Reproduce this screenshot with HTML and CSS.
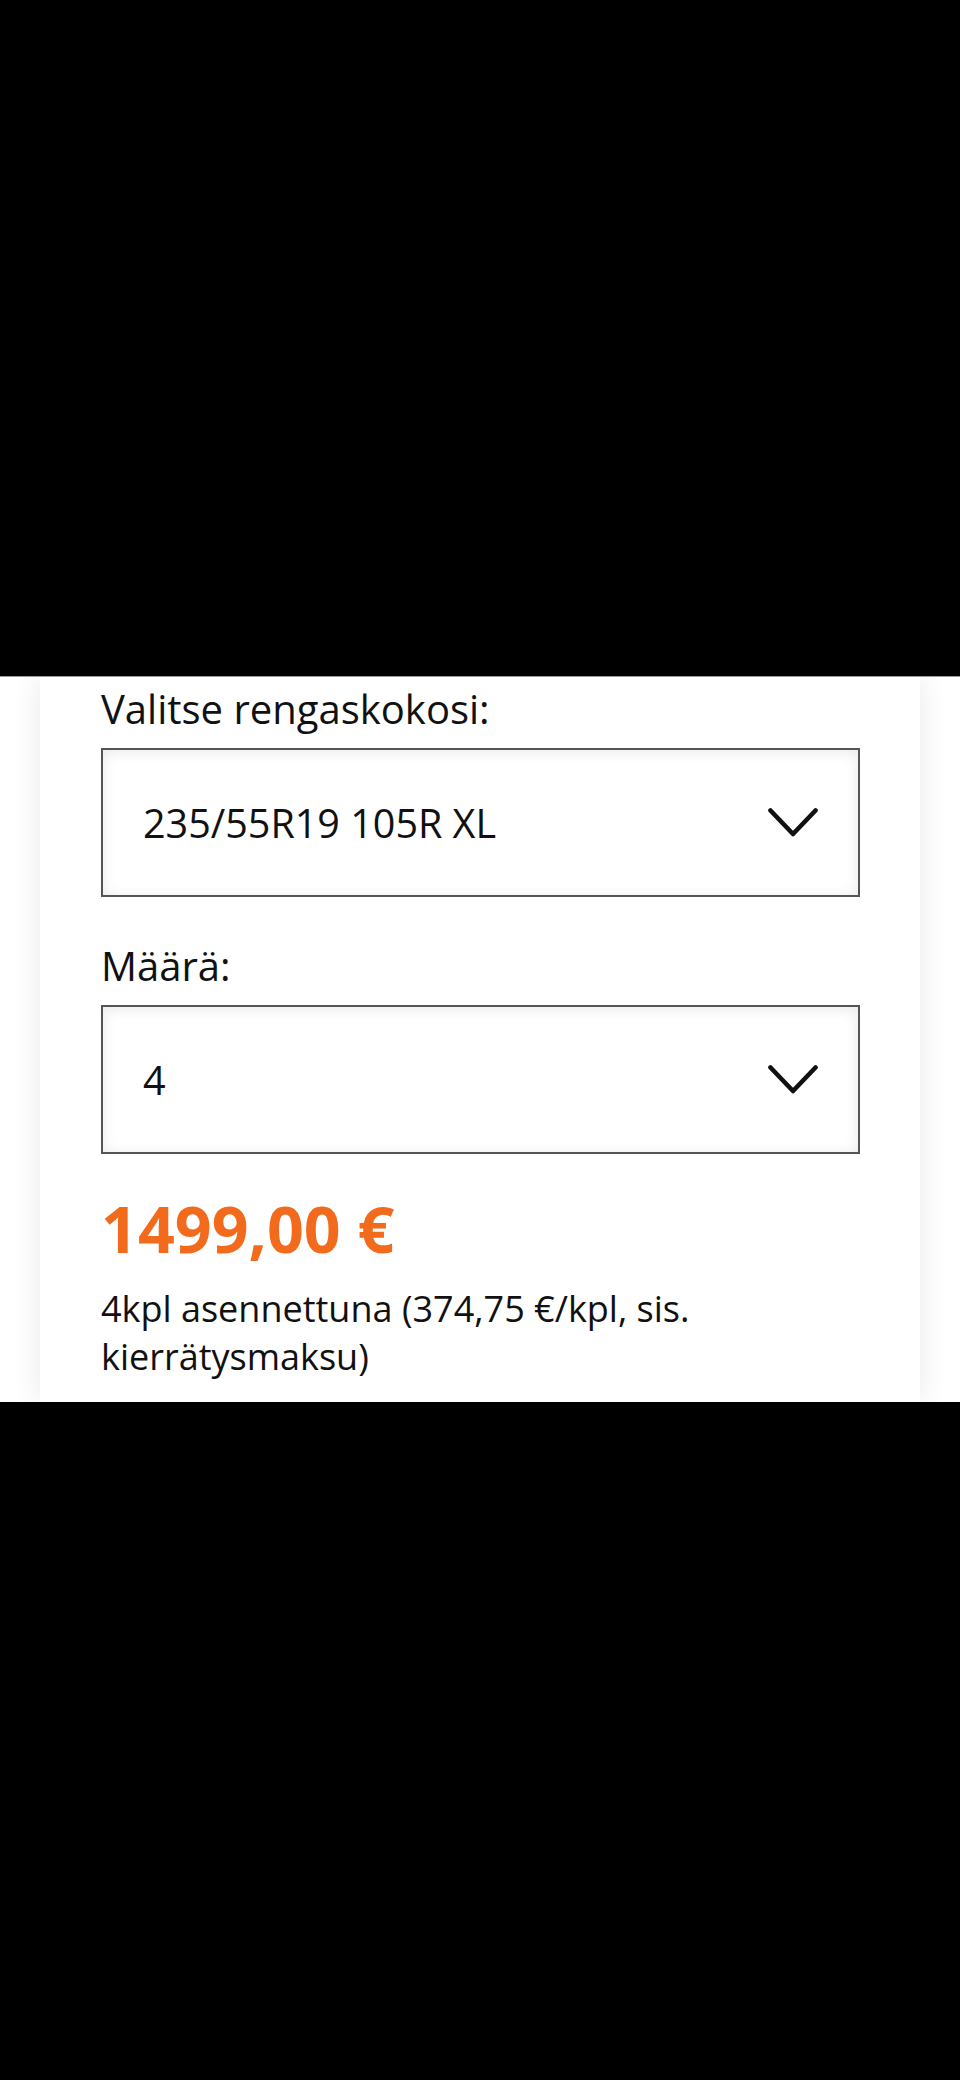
FILE: index.html
```html
<!DOCTYPE html>
<html lang="fi">
<head>
<meta charset="utf-8">
<title>Rengaskoko</title>
<link rel="stylesheet" href="styles.css">
</head>
<body>
<div class="bar-top"></div>
<section class="sheet">
  <div class="card">
    <label class="field-label">Valitse rengaskokosi:</label>
    <div class="select">
      <span class="select-value">235/55R19 105R XL</span>
      <svg class="chevron" viewBox="0 0 50 29" width="50" height="29" aria-hidden="true"><path d="M2.5 2.5 L25 26 L47.5 2.5" fill="none" stroke="#111" stroke-width="4.6" stroke-linecap="round" stroke-linejoin="round"/></svg>
    </div>
    <label class="field-label second">Määrä:</label>
    <div class="select">
      <span class="select-value">4</span>
      <svg class="chevron" viewBox="0 0 50 29" width="50" height="29" aria-hidden="true"><path d="M2.5 2.5 L25 26 L47.5 2.5" fill="none" stroke="#111" stroke-width="4.6" stroke-linecap="round" stroke-linejoin="round"/></svg>
    </div>
    <div class="price">1499,00 €</div>
    <p class="price-note">4kpl asennettuna (374,75 €/kpl, sis. kierrätysmaksu)</p>
  </div>
</section>
<div class="bar-bottom"></div>
</body>
</html>
```
FILE: styles.css
```css
html, body {
  margin: 0;
  padding: 0;
  background: #000;
}
body {
  font-family: "Open Sans", "Noto Sans", sans-serif;
  color: #111;
}
.bar-top {
  height: 676px;
  background: #000;
}
.sheet {
  height: 726px;
  background: #fff;
  padding: 0 40px;
  overflow: hidden;
  border-top: 1px solid #9a9a9a;
  box-sizing: border-box;
}
.card {
  background: #fff;
  height: 100%;
  box-shadow: 0 0 28px rgba(0, 0, 0, 0.09);
  padding: 8px 60px 0 61px;
  box-sizing: border-box;
}
.field-label {
  display: block;
  font-size: 40px;
  line-height: 48px;
  margin: 0 0 15px;
}
.field-label.second {
  margin-top: 45px;
}
.select {
  height: 149px;
  box-sizing: border-box;
  border: 2px solid #555;
  box-shadow: inset 0 2px 14px rgba(0, 0, 0, 0.09);
  display: flex;
  align-items: center;
  justify-content: space-between;
  padding: 0 40px;
  background: #fff;
}
.select-value {
  font-size: 39.5px;
}
.chevron {
  display: block;
  flex: none;
}
.price {
  margin-top: 36px;
  font-size: 64.5px;
  line-height: 76px;
  font-weight: 700;
  color: #f26b1d;
}
.price-note {
  margin: 19px 0 0;
  font-size: 36px;
  line-height: 48px;
  max-width: 640px;
}
.bar-bottom {
  height: 678px;
  background: #000;
}
```
